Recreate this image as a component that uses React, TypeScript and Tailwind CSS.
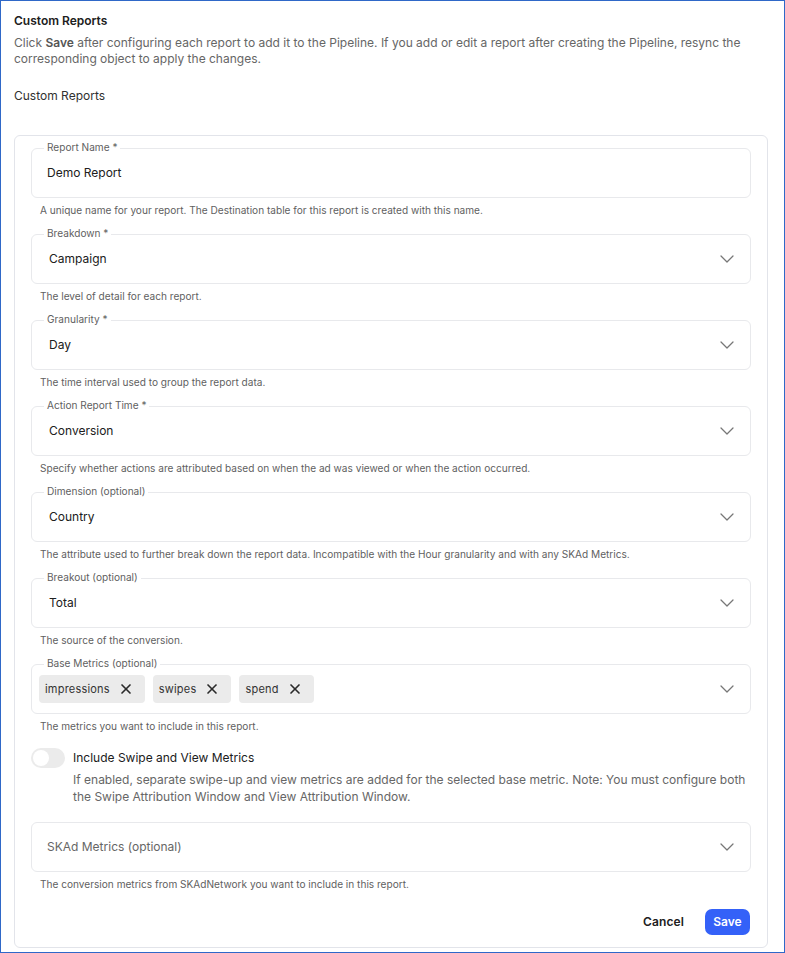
import { ChevronDown, X } from "lucide-react";

const fields = [
  { label: "Breakdown *", value: "Campaign", help: "The level of detail for each report." },
  { label: "Granularity *", value: "Day", help: "The time interval used to group the report data." },
  {
    label: "Action Report Time *",
    value: "Conversion",
    help: "Specify whether actions are attributed based on when the ad was viewed or when the action occurred.",
  },
  {
    label: "Dimension (optional)",
    value: "Country",
    help: "The attribute used to further break down the report data. Incompatible with the Hour granularity and with any SKAd Metrics.",
  },
  { label: "Breakout (optional)", value: "Total", help: "The source of the conversion." },
];

const metrics = ["impressions", "swipes", "spend"];

function Help({ children }: { children: React.ReactNode }) {
  return <p className="h-[36px] pl-[9px] pt-[5px] text-[10.1px] leading-[14px] text-[#5f5f5f]">{children}</p>;
}

function Field({ label, children }: { label?: string; children: React.ReactNode }) {
  return (
    <div className="relative flex h-[50px] items-center rounded-[6px] border border-[#e8e9ec]">
      {label && (
        <span className="absolute left-[12px] top-[-8px] bg-white px-[3px] text-[10.1px] leading-[13px] text-[#5f5f5f]">
          {label}
        </span>
      )}
      {children}
    </div>
  );
}

function Chevron() {
  return <ChevronDown className="absolute right-[11px] h-[24px] w-[24px] text-[#777777]" strokeWidth={1.25} />;
}

export default function App() {
  return (
    <div className="h-[953px] overflow-hidden border border-[#2f68c8] bg-white font-['Inter',sans-serif]">
      <div className="pl-[13px] pr-[16px] pt-[12px]">
        <h2 className="text-[12px] font-semibold leading-[16px] text-[#202020]">Custom Reports</h2>
        <p className="mt-[6px] text-[12px] leading-[16px] text-[#666666]">
          Click <b className="font-semibold text-[#555555]">Save</b> after configuring each report to add it to the
          Pipeline. If you add or edit a report after creating the Pipeline, resync the corresponding object to apply
          the changes.
        </p>
        <p className="mt-[21px] text-[12px] leading-[16px] text-[#303030]">Custom Reports</p>

        <div className="mt-[31px] h-[813px] rounded-[6px] border border-[#e2e4ea] px-[16px] pt-[12px]">
          <Field label="Report Name *">
            <span className="pl-[15px] text-[12px] text-[#202020]">Demo Report</span>
          </Field>
          <Help>A unique name for your report. The Destination table for this report is created with this name.</Help>

          {fields.map((f) => (
            <div key={f.label}>
              <Field label={f.label}>
                <span className="pl-[17px] text-[12px] text-[#202020]">{f.value}</span>
                <Chevron />
              </Field>
              <Help>{f.help}</Help>
            </div>
          ))}

          <Field label="Base Metrics (optional)">
            <div className="flex gap-[8px] pl-[7px]">
              {metrics.map((m) => (
                <span
                  key={m}
                  className="flex h-[28px] items-center gap-[8px] rounded-[4px] bg-[#ebebeb] pl-[6px] pr-[11px] text-[11px] tracking-[0.2px] text-[#333333]"
                >
                  {m}
                  <X className="h-[16px] w-[16px] text-[#2a2a2a]" strokeWidth={2.5} />
                </span>
              ))}
            </div>
            <Chevron />
          </Field>
          <p className="h-[34px] pl-[9px] pt-[5px] text-[10.1px] leading-[14px] text-[#5f5f5f]">
            The metrics you want to include in this report.
          </p>

          <div className="flex h-[74px] gap-[8px]">
            <div className="flex h-[20px] w-[34px] shrink-0 items-center rounded-full bg-[#ebebeb] pl-[2px]">
              <div className="h-[16px] w-[16px] rounded-full bg-white" />
            </div>
            <div>
              <p className="text-[12px] leading-[20px] text-[#202020]">Include Swipe and View Metrics</p>
              <p className="mt-[3px] text-[12px] leading-[17px] text-[#666666]">
                If enabled, separate swipe-up and view metrics are added for the selected base metric. Note: You must
                configure both the Swipe Attribution Window and View Attribution Window.
              </p>
            </div>
          </div>

          <Field>
            <span className="pl-[15px] text-[12px] text-[#666666]">SKAd Metrics (optional)</span>
            <Chevron />
          </Field>
          <Help>The conversion metrics from SKAdNetwork you want to include in this report.</Help>

          <div className="mt-px flex items-center justify-end gap-[21px] pr-px">
            <button className="text-[12px] font-semibold tracking-[0.1px] text-[#202020]">Cancel</button>
            <button className="h-[26px] w-[45px] rounded-[7px] bg-[#3461f8] text-[12px] font-semibold text-white">
              Save
            </button>
          </div>
        </div>
      </div>
    </div>
  );
}
